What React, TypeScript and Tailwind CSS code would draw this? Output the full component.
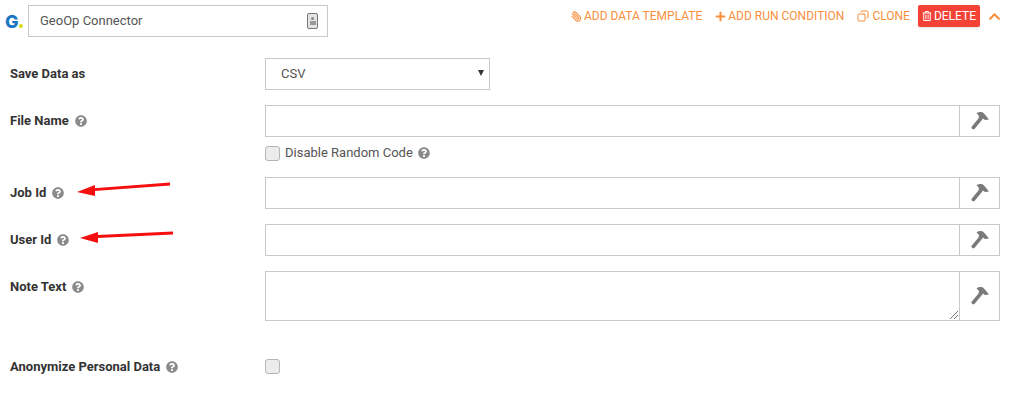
import { ReactNode } from "react"
import { Copy, Paperclip } from "lucide-react"
import { FaChevronUp, FaPlus, FaQuestionCircle, FaRegTrashAlt } from "react-icons/fa"

function Help() {
    return <FaQuestionCircle className="text-[#8a8a8a] text-[12px] shrink-0" />
}

function Label({ text, help = true, arrow }: { text: string; help?: boolean; arrow?: ReactNode }) {
    return (
        <div className="relative w-[255px] shrink-0 flex items-center gap-[6px] h-[32px] font-bold text-[13px] text-[#333]">
            <span>{text}</span>
            {help && <Help />}
            {arrow}
        </div>
    )
}

function Arrow({ x, tip, top, bottom, back, tail }: { x: number; tip: number; top: number; bottom: number; back: number; tail: number }) {
    // red hand drawn annotation arrow
    return (
        <svg className="absolute top-0 overflow-visible" style={{ left: x }} width={93} height={32}>
            <line x1={93} y1={tail} x2={17} y2={back} stroke="#f50f0f" strokeWidth={2.8} />
            <polygon points={`0,${tip} 18,${top} 18,${bottom}`} fill="#f50f0f" />
        </svg>
    )
}

function Hammer() {
    return (
        <svg width={18} height={18} viewBox="0 0 18 18">
            <path d="M5.5 1.2C8 -0.3 11 -0.3 13 1.5L18 7.5L14 8L12 6.5L10.5 8.5L3.5 17C2 18.2 -0.5 16 0.8 14.5L7.5 6.5L8 4.5C7.5 3 6.5 2 5.5 1.2Z" fill="#7a7a7a" />
        </svg>
    )
}

function HammerBox({ tall }: { tall?: boolean }) {
    return (
        <div className={`w-[40px] shrink-0 border border-l-0 border-[#c8c8c8] flex items-center justify-center ${tall ? "h-[50px]" : "h-[32px]"}`}>
            <Hammer />
        </div>
    )
}

function Field({ label, arrow, className }: { label: string; arrow?: ReactNode; className: string }) {
    return (
        <div className={`flex ${className}`}>
            <Label text={label} arrow={arrow} />
            <div className="flex-1 h-[32px] border border-[#c8c8c8]" />
            <HammerBox />
        </div>
    )
}

function Checkbox() {
    return <div className="w-[15px] h-[15px] rounded-[3px] border border-[#b5b5b5] bg-[#ececec] shrink-0" />
}

export default function App() {
    return (
        <div className="w-[1016px] h-[405px] bg-white overflow-hidden pl-[10px] pr-[16px] font-['Roboto',sans-serif] text-[#444]">
            <div className="flex items-start h-[58px] pt-[5px] -ml-[5px]">
                <div className="w-[23px] h-[32px] flex items-center relative">
                    <span className="font-['Inter',sans-serif] font-extrabold text-[18px] leading-none text-[#1a78c2] mt-px">G</span>
                    <span className="absolute left-[14px] top-[19px] w-[4px] h-[4px] rounded-full bg-[#d4dc1e]" />
                </div>
                <div className="w-[300px] h-[32px] border border-[#c8c8c8] flex items-center justify-between pl-[11px] pr-[9px] text-[13px] text-[#555]">
                    <span>GeoOp Connector</span>
                    <div className="w-[11px] h-[16px] border border-[#777] rounded-[2px] bg-[#e4e4e4] flex flex-col items-center justify-center gap-px">
                        <div className="w-[3px] h-[3px] bg-[#888] rounded-full" />
                        <div className="w-[6px] h-[4px] bg-[#999]" />
                    </div>
                </div>
                <div className="ml-auto -mr-[1px] flex items-center h-[26px] -mt-[2px] text-[12px] text-[#f98f3c] whitespace-nowrap">
                    <Paperclip size={11} strokeWidth={2.4} className="mr-[2px] -ml-[2px] -scale-x-100" />
                    <span>ADD DATA TEMPLATE</span>
                    <FaPlus className="text-[11px] ml-[13px] mr-[2px]" />
                    <span>ADD RUN CONDITION</span>
                    <Copy size={12} strokeWidth={2} className="ml-[13px] mr-[3px] -scale-x-100" />
                    <span>CLONE</span>
                    <div className="ml-[8px] h-[22px] px-[4px] flex items-center gap-[2px] bg-[#f44336] text-white rounded-[2px] shadow-sm">
                        <FaRegTrashAlt className="text-[10px]" />
                        <span>DELETE</span>
                    </div>
                    <FaChevronUp className="text-[13px] ml-[8px]" />
                </div>
            </div>

            <div className="flex">
                <Label text="Save Data as" help={false} />
                <div className="relative w-[225px] h-[32px] border border-[#c8c8c8] flex items-center pl-[15px] text-[13px] text-[#555]">
                    CSV
                    <span className="absolute right-[5px] top-[11px] w-0 h-0 border-x-[3px] border-x-transparent border-t-[6px] border-t-[#333]" />
                </div>
            </div>

            <Field label="File Name" className="mt-[15px]" />

            <div className="flex items-center gap-[5px] mt-[8px] h-[16px] pl-[255px] text-[13px] text-[#555]">
                <Checkbox />
                <span>Disable Random Code</span>
                <Help />
            </div>

            <Field label="Job Id" className="mt-[16px]" arrow={<Arrow x={67} tip={15} top={8} bottom={19} back={12.7} tail={7} />} />
            <Field label="User Id" className="mt-[15px]" arrow={<Arrow x={70} tip={14} top={8} bottom={19} back={12.5} tail={9} />} />

            <div className="flex mt-[15px]">
                <Label text="Note Text" />
                <div className="relative flex-1 h-[50px] border border-[#c8c8c8]">
                    <svg className="absolute right-[1px] bottom-[1px]" width={8} height={8}>
                        <path d="M0 8L8 0M4 8L8 4" stroke="#777" strokeWidth={1} />
                    </svg>
                </div>
                <HammerBox tall />
            </div>

            <div className="flex items-center mt-[37px] h-[16px]">
                <div className="w-[255px] pt-px flex items-center gap-[6px] font-bold text-[13px] text-[#333]">
                    <span>Anonymize Personal Data</span>
                    <Help />
                </div>
                <Checkbox />
            </div>
        </div>
    )
}
